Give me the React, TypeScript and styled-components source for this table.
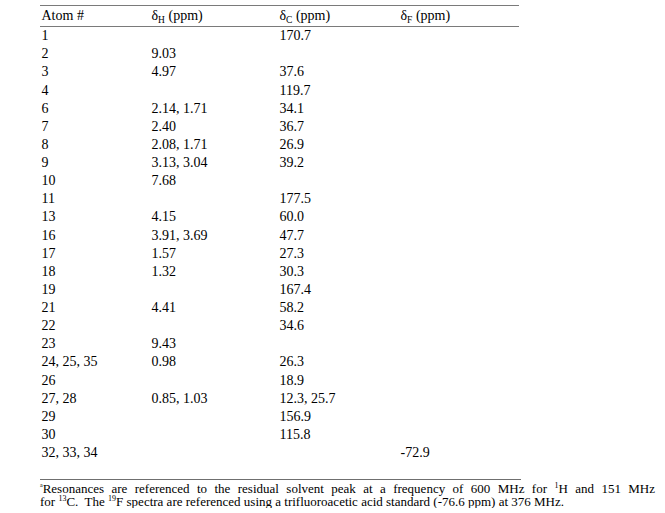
import React from "react";
import styled, { createGlobalStyle } from "styled-components";

const Global = createGlobalStyle`
  html, body { margin: 0; padding: 0; background: #ffffff; }
  body { font-family: "Liberation Serif", "Times New Roman", serif; color: #000; }
`;

const Page = styled.div`
  padding: 5px 0 0 40px;
  width: 615px;
`;

const Table = styled.div`
  width: 479px;
  border-top: 1px solid #7a7a7a;
`;

const Row = styled.div<{ $head?: boolean }>`
  display: grid;
  grid-template-columns: 110px 128px 121px 120px;
  font-size: 14px;
  line-height: 18.13px;
  height: 18.13px;
  ${(p) =>
    p.$head &&
    `
    padding: 1px 0 1px;
    border-bottom: 1px solid #7a7a7a;
  `}
`;

const Cell = styled.div`
  padding-left: 1.5px;
  white-space: nowrap;
`;

const Sub = styled.span`
  font-size: 9.5px;
  vertical-align: -3px;
  line-height: 0;
`;

const Rule = styled.div`
  width: 481px;
  margin-top: 17px;
  border-top: 1px solid #6f6f6f;
`;

const Note = styled.div`
  padding-top: 2px;
  font-size: 13px;
  line-height: 13px;
`;

const NoteLine = styled.div<{ $justify?: boolean }>`
  white-space: nowrap;
  ${(p) =>
    p.$justify &&
    `
    white-space: normal;
    text-align: justify;
    text-align-last: justify;
  `}
`;

const Sup = styled.span<{ $tiny?: boolean }>`
  font-size: ${(p) => (p.$tiny ? "6px" : "8px")};
  vertical-align: ${(p) => (p.$tiny ? "6px" : "5px")};
  line-height: 0;
`;

const rows: [string, string, string, string][] = [
  ["1", "", "170.7", ""],
  ["2", "9.03", "", ""],
  ["3", "4.97", "37.6", ""],
  ["4", "", "119.7", ""],
  ["6", "2.14, 1.71", "34.1", ""],
  ["7", "2.40", "36.7", ""],
  ["8", "2.08, 1.71", "26.9", ""],
  ["9", "3.13, 3.04", "39.2", ""],
  ["10", "7.68", "", ""],
  ["11", "", "177.5", ""],
  ["13", "4.15", "60.0", ""],
  ["16", "3.91, 3.69", "47.7", ""],
  ["17", "1.57", "27.3", ""],
  ["18", "1.32", "30.3", ""],
  ["19", "", "167.4", ""],
  ["21", "4.41", "58.2", ""],
  ["22", "", "34.6", ""],
  ["23", "9.43", "", ""],
  ["24, 25, 35", "0.98", "26.3", ""],
  ["26", "", "18.9", ""],
  ["27, 28", "0.85, 1.03", "12.3, 25.7", ""],
  ["29", "", "156.9", ""],
  ["30", "", "115.8", ""],
  ["32, 33, 34", "", "", "-72.9"],
];

export default function App() {
  return (
    <>
      <Global />
      <Page>
        <Table>
          <Row $head>
            <Cell>Atom #</Cell>
            <Cell>
              δ<Sub>H</Sub> (ppm)
            </Cell>
            <Cell>
              δ<Sub>C</Sub> (ppm)
            </Cell>
            <Cell>
              δ<Sub>F</Sub> (ppm)
            </Cell>
          </Row>
          {rows.map((r, i) => (
            <Row key={i}>
              {r.map((c, j) => (
                <Cell key={j}>{c}</Cell>
              ))}
            </Row>
          ))}
        </Table>
        <Rule />
        <Note>
          <NoteLine $justify>
            <Sup $tiny>a</Sup>Resonances are referenced to the residual solvent peak at a
            frequency of 600 MHz for <Sup>1</Sup>H and 151 MHz
          </NoteLine>
          <NoteLine>
            for <Sup>13</Sup>C.&nbsp; The <Sup>19</Sup>F spectra are referenced using a
            trifluoroacetic acid standard (-76.6 ppm) at 376 MHz.
          </NoteLine>
        </Note>
      </Page>
    </>
  );
}
